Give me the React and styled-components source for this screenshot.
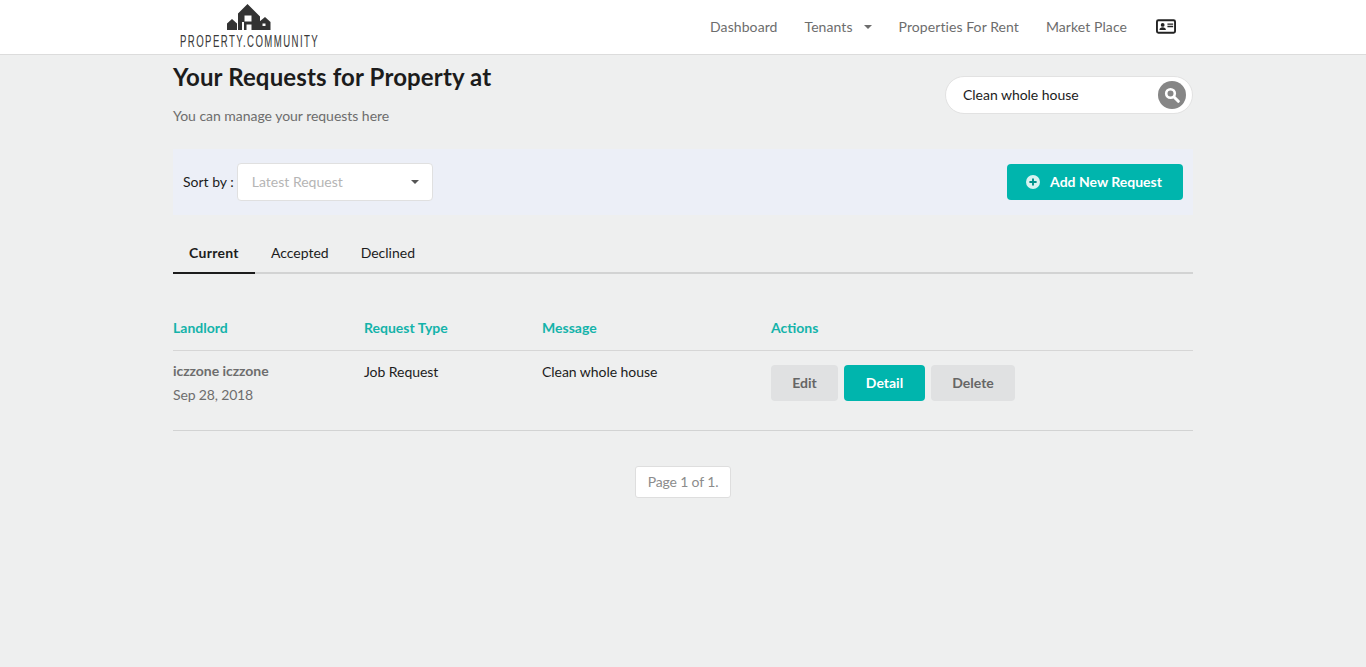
import React from 'react'
import styled, { createGlobalStyle } from 'styled-components'

const GlobalStyle = createGlobalStyle`
  html, body { margin: 0; padding: 0; }
  body {
    background: #eeefef;
    font-family: Lato, "Open Sans", sans-serif;
    color: #1c1c1c;
    min-height: 667px;
  }
`

const Header = styled.header`
  height: 54px;
  background: #fff;
  border-bottom: 1px solid #dcdcdc;
`
const HeaderInner = styled.div`
  width: 1020px;
  height: 54px;
  margin: 0 auto;
  display: flex;
  align-items: center;
  justify-content: space-between;
`
const Logo = styled.a`
  width: 146px;
  margin-left: 7px;
  height: 54px;
  display: flex;
  flex-direction: column;
  align-items: flex-start;
`
const LogoMark = styled.svg`
  display: block;
  margin: 4px 0 0 47px;
`
const LogoText = styled.span`
  display: block;
  font-family: "Liberation Sans", sans-serif;
  font-size: 16px;
  line-height: 13px;
  margin-top: 4px;
  color: #3a3a3a;
  letter-spacing: 2.4px;
  white-space: nowrap;
  -webkit-text-stroke: 0.12px #3a3a3a;
  transform: scaleX(0.6);
  transform-origin: left center;
`
const Nav = styled.nav`
  display: flex;
  align-items: center;
  gap: 27px;
  margin-right: 17px;
  margin-top: -1px;
`
const NavLink = styled.a`
  font-size: 14px;
  letter-spacing: 0.08px;
  color: #6d6d6d;
  display: flex;
  align-items: center;
`
const IconLink = styled(NavLink)`
  margin-left: 2px;
`
const Caret = styled.i`
  display: inline-block;
  width: 0;
  height: 0;
  margin-left: ${(p) => p.$gap || 11}px;
  border-left: 4px solid transparent;
  border-right: 4px solid transparent;
  border-top: 4px solid ${(p) => p.$color || '#6d6d6d'};
`
const Main = styled.main`
  width: 1020px;
  margin: 0 auto;
`
const TitleRow = styled.div`
  display: flex;
  justify-content: space-between;
  align-items: flex-start;
  height: 94px;
`
const Title = styled.h1`
  margin: 7px 0 0;
  font-size: 24px;
  line-height: 29px;
  font-weight: 700;
  letter-spacing: 0.14px;
  color: #1c1c1c;
`
const Subtitle = styled.p`
  margin: 16px 0 0;
  font-size: 14px;
  line-height: 18px;
  letter-spacing: -0.03px;
  color: #6d6d6d;
`
const SearchBox = styled.div`
  width: 248px;
  height: 38px;
  box-sizing: border-box;
  margin-top: 21px;
  background: #fff;
  border: 1px solid #e2e2e2;
  border-radius: 19px;
  display: flex;
  align-items: center;
  justify-content: space-between;
  padding: 0 6px 0 17px;
  font-size: 14px;
  letter-spacing: -0.03px;
  color: #1c1c1c;
`
const SearchText = styled.span`
  margin-bottom: 2px;
`
const SearchButton = styled.span`
  width: 28px;
  height: 28px;
  border-radius: 50%;
  background: #868686;
  display: flex;
  align-items: center;
  justify-content: center;
`
const SortBar = styled.div`
  height: 66px;
  background: #eceff7;
  display: flex;
  align-items: center;
  justify-content: space-between;
  padding: 0 10px;
`
const SortGroup = styled.div`
  display: flex;
  align-items: center;
  gap: 3px;
  font-size: 14px;
  color: #1c1c1c;
`
const SortLabel = styled.span`
  margin-bottom: 2px;
`
const SortSelect = styled.div`
  width: 196px;
  height: 38px;
  box-sizing: border-box;
  background: #fff;
  border: 1px solid #e0e0e0;
  border-radius: 4px;
  display: flex;
  align-items: center;
  justify-content: space-between;
  padding: 0 13px 0 14px;
  color: #b5b5b5;
`
const AddButton = styled.button`
  width: 176px;
  height: 36px;
  background: #00b5ad;
  border: 0;
  border-radius: 4px;
  color: #fff;
  font: 700 14px Lato, sans-serif;
  display: flex;
  align-items: center;
  justify-content: center;
  gap: 10px;
  padding: 0 2px 0 0;
`
const AddLabel = styled.span`
  margin-bottom: 2px;
`
const Tabs = styled.div`
  display: flex;
  margin-top: 19px;
  height: 38px;
  border-bottom: 2px solid #d2d3d3;
`
const Tab = styled.a`
  padding: 0 16px;
  height: 40px;
  box-sizing: border-box;
  font-size: 14px;
  line-height: 38px;
  font-weight: ${(p) => (p.$active ? 700 : 400)};
  letter-spacing: ${(p) => (p.$active ? '0.3px' : '0')};
  color: #1c1c1c;
  border-bottom: ${(p) => (p.$active ? '2px solid #1c1c1c' : '0')};
`
const Row = styled.div`
  display: grid;
  grid-template-columns: 191px 178px 229px 1fr;
  border-bottom: 1px solid ${(p) => (p.$head ? '#d6d6d6' : '#d2d3d3')};
`
const HeadRow = styled(Row)`
  margin-top: 41px;
  height: 35px;
  font-size: 14px;
  line-height: 26px;
  font-weight: 700;
  color: #14b3aa;
`
const BodyRow = styled(Row)`
  height: 79px;
  font-size: 14px;
  letter-spacing: -0.05px;
  color: #1c1c1c;
`
const Cell = styled.div`
  padding-top: 12px;
  line-height: 18px;
`
const LandlordCell = styled(Cell)`
  padding-top: 11px;
`
const Landlord = styled.div`
  font-weight: 700;
  color: #6d6d6d;
`
const DateText = styled.div`
  margin-top: 6px;
  color: #6d6d6d;
  letter-spacing: -0.15px;
`
const Actions = styled.div`
  display: flex;
  gap: 6px;
  padding-top: 14px;
`
const ActionButton = styled.button`
  height: 36px;
  width: ${(p) => p.$w}px;
  border: 0;
  border-radius: 4px;
  background: ${(p) => (p.$primary ? '#00b5ad' : '#e0e1e2')};
  color: ${(p) => (p.$primary ? '#fff' : '#666')};
  font: 700 14px Lato, sans-serif;
  padding: 0 0 2px;
`
const Pager = styled.div`
  display: flex;
  justify-content: center;
  margin-top: 35px;
`
const PageLabel = styled.span`
  width: 96px;
  height: 32px;
  box-sizing: border-box;
  text-align: center;
  background: #fff;
  border: 1px solid #dedede;
  border-radius: 3px;
  font-size: 14px;
  letter-spacing: -0.15px;
  line-height: 30px;
  color: #8c8c8c;
`

const ProfileIcon = () => (
  <svg width="20" height="15" viewBox="0 0 21 15">
    <rect x="1" y="1" width="19" height="13" rx="1.5" fill="none" stroke="#222" strokeWidth="2" />
    <circle cx="7" cy="5.8" r="2" fill="#222" />
    <path d="M3.6 11.2c0-2 1.5-3 3.4-3s3.4 1 3.4 3z" fill="#222" />
    <path d="M12 5h6M12 7.5h6" stroke="#222" strokeWidth="1.4" />
  </svg>
)

const SearchIcon = () => (
  <svg width="16" height="16" viewBox="0 0 16 16">
    <circle cx="6.5" cy="6.5" r="4.3" fill="none" stroke="#fff" strokeWidth="2.6" />
    <path d="M10 10l4.3 4.3" stroke="#fff" strokeWidth="3" strokeLinecap="round" />
  </svg>
)

const PlusCircle = () => (
  <svg width="14" height="14" viewBox="0 0 14 14">
    <circle cx="7" cy="7" r="7" fill="#d8f3f1" />
    <path d="M3.4 7h7.2M7 3.4v7.2" stroke="#00928b" strokeWidth="1.9" />
  </svg>
)

// logo: big house with an arched door, a small house each side
const HouseMark = () => (
  <LogoMark width="44" height="27" viewBox="0 0 44 27">
    <path d="M0 26V19.5L5 15l5 4.5V26z" fill="#333" />
    <path d="M32 26v-8l6-5 5.5 5v8z" fill="#333" />
    <path
      fillRule="evenodd"
      fill="#333"
      d="M11 26V9.5L20.5 0 33 12.5V26h-6v-8h-2.5v-6.5h-7V18H15v8z"
    />
    <path d="M17 17.5h10V26h-2.5v-5.5h-5V26H17z" fill="#333" />
    <path d="M35.5 19.5h3V22h-3z" fill="#fff" />
  </LogoMark>
)

export default function App() {
  return (
    <>
      <GlobalStyle />
      <Header>
        <HeaderInner>
          <Logo>
            <HouseMark />
            <LogoText>PROPERTY.COMMUNITY</LogoText>
          </Logo>
          <Nav>
            <NavLink>Dashboard</NavLink>
            <NavLink>Tenants<Caret /></NavLink>
            <NavLink>Properties For Rent</NavLink>
            <NavLink>Market Place</NavLink>
            <IconLink><ProfileIcon /></IconLink>
          </Nav>
        </HeaderInner>
      </Header>
      <Main>
        <TitleRow>
          <div>
            <Title>Your Requests for Property at</Title>
            <Subtitle>You can manage your requests here</Subtitle>
          </div>
          <SearchBox>
            <SearchText>Clean whole house</SearchText>
            <SearchButton><SearchIcon /></SearchButton>
          </SearchBox>
        </TitleRow>
        <SortBar>
          <SortGroup>
            <SortLabel>Sort by :</SortLabel>
            <SortSelect>
              <SortLabel>Latest Request</SortLabel>
              <Caret $gap={1} $color="#555" />
            </SortSelect>
          </SortGroup>
          <AddButton><PlusCircle /><AddLabel>Add New Request</AddLabel></AddButton>
        </SortBar>
        <Tabs>
          <Tab $active>Current</Tab>
          <Tab>Accepted</Tab>
          <Tab>Declined</Tab>
        </Tabs>
        <HeadRow $head>
          <div>Landlord</div>
          <div>Request Type</div>
          <div>Message</div>
          <div>Actions</div>
        </HeadRow>
        <BodyRow>
          <LandlordCell>
            <Landlord>iczzone iczzone</Landlord>
            <DateText>Sep 28, 2018</DateText>
          </LandlordCell>
          <Cell>Job Request</Cell>
          <Cell>Clean whole house</Cell>
          <Actions>
            <ActionButton $w={67}>Edit</ActionButton>
            <ActionButton $w={81} $primary>Detail</ActionButton>
            <ActionButton $w={84}>Delete</ActionButton>
          </Actions>
        </BodyRow>
        <Pager>
          <PageLabel>Page 1 of 1.</PageLabel>
        </Pager>
      </Main>
    </>
  )
}
